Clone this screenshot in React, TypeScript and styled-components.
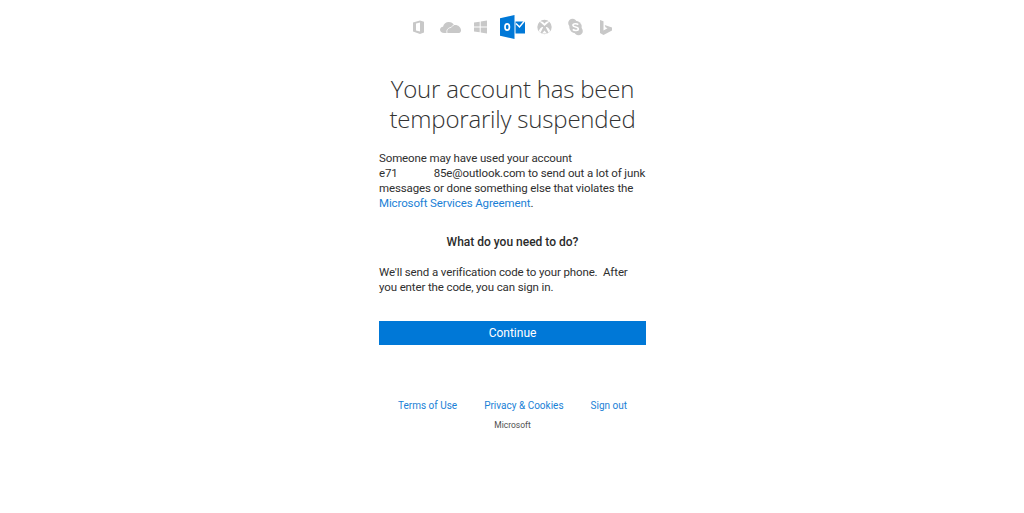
import React from 'react';
import styled, { createGlobalStyle } from 'styled-components';

const GlobalStyle = createGlobalStyle`
  html, body {
    margin: 0;
    padding: 0;
    background: #ffffff;
  }
`;

const Page = styled.div`
  width: 1024px;
  height: 513px;
  overflow: hidden;
  display: flex;
  flex-direction: column;
  align-items: center;
  font-family: Roboto, "Open Sans", sans-serif;
  color: #2b2b2b;
`;

const Brands = styled.div`
  height: 24px;
  margin-top: 15px;
  display: flex;
  align-items: center;
`;

const Icon = styled.svg<{ $w: number; $left?: number }>`
  width: ${p => p.$w}px;
  height: 24px;
  margin-left: ${p => p.$left ?? 0}px;
  display: block;
`;

const Card = styled.div`
  width: 267px;
  margin-top: 35px;
  margin-left: 1px;
`;

const Title = styled.h1`
  margin: 0 -10px;
  font-family: "Open Sans", sans-serif;
  font-size: 24px;
  line-height: 30px;
  font-weight: 300;
  letter-spacing: -0.2px;
  text-align: center;
  color: #333333;
`;

const Para = styled.p<{ $top: number }>`
  margin: ${p => p.$top}px -4px 0 0;
  font-size: 11.5px;
  line-height: 15px;
  letter-spacing: -0.12px;
  color: #2f2f2f;
`;

const Gap = styled.span`
  display: inline-block;
  width: 36px;
`;

const Link = styled.a`
  color: #1a7fd6;
  text-decoration: none;
`;

const Question = styled.h2`
  margin: 24px 0 0;
  font-size: 12px;
  line-height: 15px;
  font-weight: 500;
  text-align: center;
`;

const Continue = styled.button`
  display: block;
  width: 100%;
  height: 24px;
  margin-top: 26px;
  padding: 0;
  border: 0;
  background: #0078d7;
  color: #ffffff;
  font-family: inherit;
  font-size: 12px;
`;

const Footer = styled.div`
  margin-top: 54px;
  display: flex;
  justify-content: center;
  gap: 27px;
  font-size: 10px;
  line-height: 14px;
`;

const Company = styled.div`
  margin-top: 6px;
  text-align: center;
  font-size: 8.5px;
  line-height: 12px;
  color: #505050;
`;

const grey = '#c8c8c8';

const App = () => (
  <Page>
    <GlobalStyle />
    <Brands>
      <Icon $w={11} viewBox="0 0 11 24">
        <path fill={grey} fillRule="evenodd" d="M0 7.500 7 5.500l4 1.200v10.800L7 19l-7-2.500zM7 7.500 3 8.500v7l4 1z" />
      </Icon>
      <Icon $w={21} $left={16} viewBox="0 0 21 24">
        <path fill={grey} d="M4 18c-2.200 0-4-1.300-4-3.200 0-1.700 1.200-2.900 3-3.100C3.700 8.900 6 7 8.800 7c2.300 0 4.200 1.200 5.200 3.100 3.700-.6 6.600 1.700 7 4.800.2 1.700-1 3.100-2.800 3.100z" />
        <path fill="none" stroke="#ffffff" strokeWidth=".8" d="M7 18c-1-3 1.500-5.500 4-5.500.8-1.300 1.800-2 3-2.400" />
      </Icon>
      <Icon $w={13} $left={13} viewBox="0 0 13 24">
        <path fill={grey} d="M0 7.500 5.700 6.700v4.800H0zM6.700 6.500 13 5.600v5.900H6.700zM0 12.500h5.700v4.800L0 16.500zM6.700 12.500H13v5.900l-6.300-.9z" />
      </Icon>
      <Icon $w={25} $left={13} viewBox="0 0 25 24">
        <path fill="#0078d7" d="M0 3.200 14.500 0v24L0 20.800z" />
        <path fill="#0078d7" d="M15.500 6.500H25v12h-9.500z" />
        <path fill="none" stroke="#ffffff" strokeWidth="1.500" d="M16 8.500l3.500 3.500 5-6" />
        <ellipse cx="7.200" cy="12" rx="2.200" ry="3.200" fill="none" stroke="#ffffff" strokeWidth="1.700" />
      </Icon>
      <Icon $w={15} $left={12} viewBox="0 0 15 24">
        <circle cx="7.500" cy="12" r="7.200" fill={grey} />
        <path fill="#ffffff" d="M2.500 6.500C4.500 6 6 7 7.500 8.500 9 7 10.500 6 12.500 6.500L7.500 11zM1.800 16C3 13 5 11.500 6.200 12.200L3.500 17.800zM13.200 16C12 13 10 11.500 8.800 12.200L11.500 17.800zM5 18.500 7.500 15.500 10 18.500z" />
      </Icon>
      <Icon $w={15} $left={16} viewBox="0 0 15 24">
        <circle cx="4.500" cy="8" r="4.300" fill={grey} />
        <circle cx="10.500" cy="16" r="4.300" fill={grey} />
        <circle cx="7.500" cy="12" r="6.200" fill={grey} />
        <path fill="none" stroke="#ffffff" strokeWidth="1.600" d="M10.300 9.700C9 8.500 5 8.300 4.900 10.300c0 2.200 5.400 1.300 5.400 3.600 0 1.900-4 2-5.500.5" />
      </Icon>
      <Icon $w={12} $left={17} viewBox="0 0 12 24">
        <path fill={grey} d="M0 5l3.500 1.200v9.300L7.500 13.200 5.500 12.300 4.700 10 12 12.600v3L3.500 20 0 18z" />
      </Icon>
    </Brands>
    <Card>
      <Title>Your account has been temporarily suspended</Title>
      <Para $top={17}>
        Someone may have used your account
        <br />
        e71<Gap />85e@outlook.com to send out a lot of junk
        <br />
        messages or done something else that violates the
        <br />
        <Link href="#">Microsoft Services Agreement</Link>.
      </Para>
      <Question>What do you need to do?</Question>
      <Para $top={15}>
        We'll send a verification code to your phone.&nbsp; After
        <br />
        you enter the code, you can sign in.
      </Para>
      <Continue>Continue</Continue>
      <Footer>
        <Link href="#">Terms of Use</Link>
        <Link href="#">Privacy &amp; Cookies</Link>
        <Link href="#">Sign out</Link>
      </Footer>
      <Company>Microsoft</Company>
    </Card>
  </Page>
);

export default App;
